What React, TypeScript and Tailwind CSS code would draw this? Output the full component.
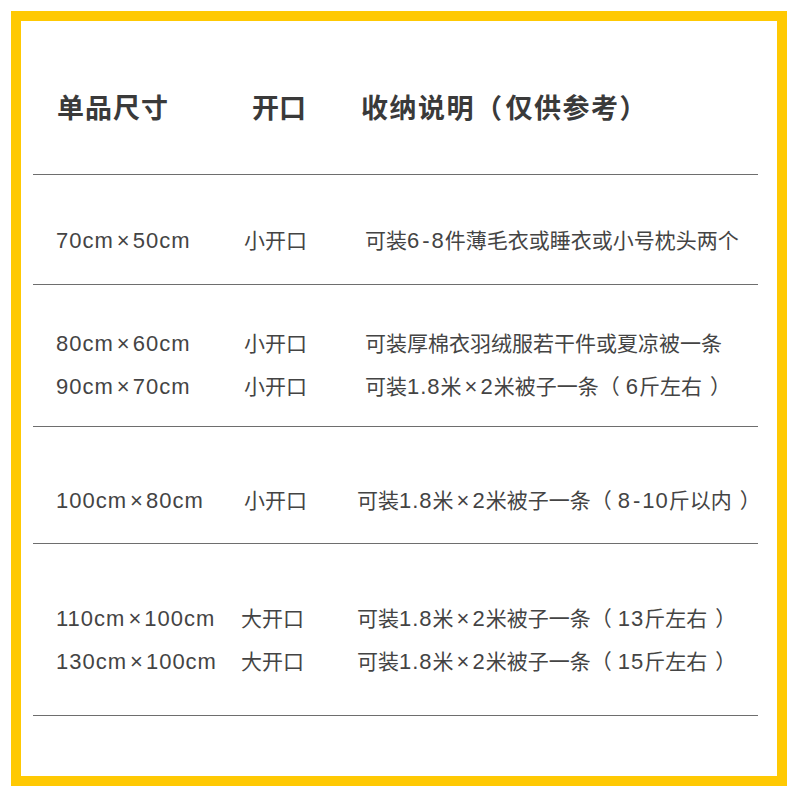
import React from 'react'

type Row = { size: string; open: string; note: string; w1: string; w2: string }

const sans = "font-['Liberation_Sans','Noto_Sans_CJK_SC',sans-serif]"

// splits a line into latin / cjk / punctuation runs so each can get its own spacing
function Rich({ text, parenL, parenR }: { text: string; parenL: string; parenR: string }) {
  const parts: { kind: string; s: string }[] = []
  for (const ch of text) {
    let kind = 'cjk'
    if (ch === '×') kind = 'times'
    else if (ch === '（') kind = 'pl'
    else if (ch === '）') kind = 'pr'
    else if (ch === '-') kind = 'dash'
    else if (ch.charCodeAt(0) < 128) kind = 'latin'
    const last = parts[parts.length - 1]
    if (last && last.kind === kind && (kind === 'latin' || kind === 'cjk')) last.s += ch
    else parts.push({ kind, s: ch })
  }
  return (
    <>
      {parts.map((p, i) => {
        if (p.kind === 'latin') return <span key={i} className="text-[22px] tracking-[1px]">{p.s}</span>
        if (p.kind === 'times') return <span key={i} className="text-[22px] ml-[3px] mr-[3px]">{p.s}</span>
        if (p.kind === 'dash') return <span key={i} className="text-[22px] mx-[2px]">{p.s}</span>
        if (p.kind === 'pl') return <span key={i} className={parenL}>{p.s}</span>
        if (p.kind === 'pr') return <span key={i} className={parenR}>{p.s}</span>
        return <span key={i}>{p.s}</span>
      })}
    </>
  )
}

const sections: { pt: string; h: string; rows: Row[] }[] = [
  {
    pt: 'pt-[44px]',
    h: 'h-[109px]',
    rows: [{ size: '70cm×50cm', open: '小开口', note: '可装6-8件薄毛衣或睡衣或小号枕头两个', w1: 'w-[188px]', w2: 'w-[121px]' }]
  },
  {
    pt: 'pt-[37px]',
    h: 'h-[141px]',
    rows: [
      { size: '80cm×60cm', open: '小开口', note: '可装厚棉衣羽绒服若干件或夏凉被一条', w1: 'w-[188px]', w2: 'w-[121px]' },
      { size: '90cm×70cm', open: '小开口', note: '可装1.8米×2米被子一条（6斤左右）', w1: 'w-[188px]', w2: 'w-[121px]' }
    ]
  },
  {
    pt: 'pt-[52px]',
    h: 'h-[116px]',
    rows: [{ size: '100cm×80cm', open: '小开口', note: '可装1.8米×2米被子一条（8-10斤以内）', w1: 'w-[188px]', w2: 'w-[113px]' }]
  },
  {
    pt: 'pt-[53px]',
    h: 'h-[171px]',
    rows: [
      { size: '110cm×100cm', open: '大开口', note: '可装1.8米×2米被子一条（13斤左右）', w1: 'w-[185px]', w2: 'w-[116px]' },
      { size: '130cm×100cm', open: '大开口', note: '可装1.8米×2米被子一条（15斤左右）', w1: 'w-[185px]', w2: 'w-[116px]' }
    ]
  }
]

const Line = () => <div className="h-px w-full bg-[#6e6e6e]" />

export default function App() {
  return (
    <div className={`w-[800px] h-[800px] bg-white p-[11px] ${sans}`}>
      <div className="w-[776px] h-[775px] border-[10px] border-[#ffc903] bg-white pl-[12px] pr-[19px]">
        {/* header */}
        <div className="h-[153px] pt-[66px] pl-[24px] flex text-[27px] leading-[40px] font-bold text-[#3a3a3a] font-['Noto_Sans_CJK_SC',sans-serif] whitespace-nowrap">
          <span className="w-[195px] shrink-0 tracking-[1px]">单品尺寸</span>
          <span className="w-[109px] shrink-0">开口</span>
          <span className="tracking-[1.5px]">
            <Rich text="收纳说明（仅供参考）" parenL="mr-[2px]" parenR="" />
          </span>
        </div>
        <Line />
        {sections.map((s, i) => (
          <React.Fragment key={i}>
            <div className={`${s.h} ${s.pt} pl-[23px] text-[21px] leading-[43px] text-[#444]`}>
              {s.rows.map((r) => (
                <div key={r.size} className="flex items-baseline whitespace-nowrap">
                  <span className={`${r.w1} shrink-0`}>
                    <Rich text={r.size} parenL="" parenR="" />
                  </span>
                  <span className={`${r.w2} shrink-0`}>{r.open}</span>
                  <span>
                    <Rich text={r.note} parenL="mr-[6px]" parenR="ml-[8px]" />
                  </span>
                </div>
              ))}
            </div>
            <Line />
          </React.Fragment>
        ))}
      </div>
    </div>
  )
}
